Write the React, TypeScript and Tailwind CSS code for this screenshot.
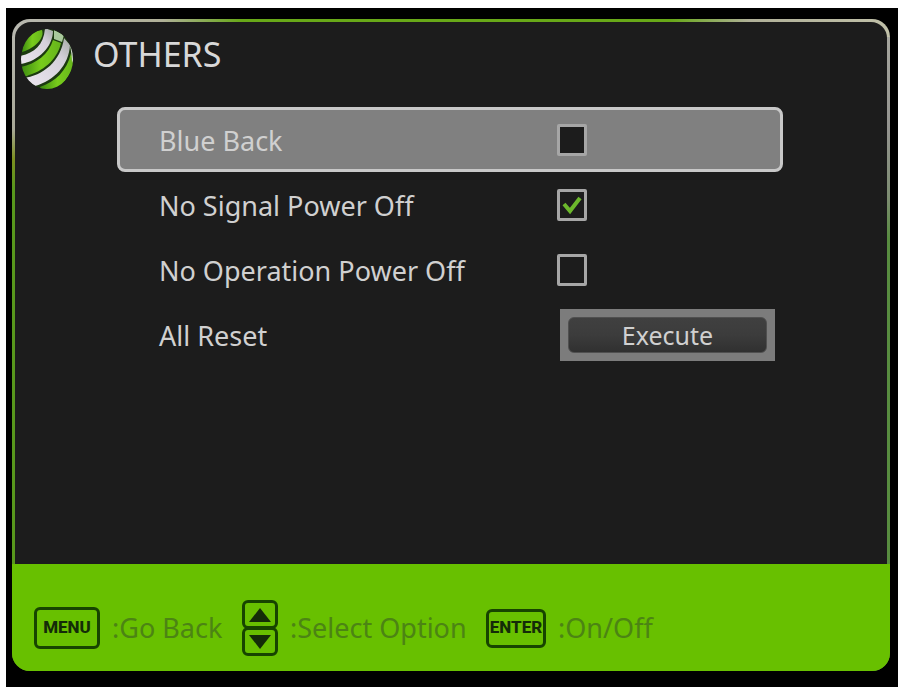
import { FC, useState } from "react";

interface Option {
  id: string;
  label: string;
  checked: boolean;
}

const initialOptions: Option[] = [
  { id: "blue-back", label: "Blue Back", checked: false },
  { id: "no-signal", label: "No Signal Power Off", checked: true },
  { id: "no-operation", label: "No Operation Power Off", checked: false },
];

const Logo: FC = () => (
  <svg viewBox="0 0 54 62" className="h-[62px] w-[54px] shrink-0" aria-hidden="true">
    <defs>
      <clipPath id="globe">
        <ellipse cx="26" cy="31" rx="26" ry="30" />
      </clipPath>
      <linearGradient id="leaf" x1="0" y1="0" x2="1" y2="0">
        <stop offset="0" stopColor="#3c8a10" />
        <stop offset="0.5" stopColor="#78cc1c" />
        <stop offset="1" stopColor="#66b41c" />
      </linearGradient>
      <linearGradient id="ribbon" x1="0" y1="1" x2="1" y2="0">
        <stop offset="0" stopColor="#ece6f0" />
        <stop offset="0.7" stopColor="#d4d0da" />
        <stop offset="1" stopColor="#a4aaa4" />
      </linearGradient>
    </defs>
    <g clipPath="url(#globe)">
      <rect width="54" height="62" fill="#1c3a10" />
      <path d="M1 24C2 12 9 3 21 2C24 10 14 20 1 24Z" fill="url(#leaf)" />
      <path d="M-1 28C13 25 23 17 24 0L32 3C32 18 18 33 0 36Z" fill="url(#ribbon)" />
      <path d="M0 39C15 36 28 26 32 12L40 15C37 29 25 42 8 47C4 50 0 47 0 39Z" fill="url(#leaf)" />
      <path d="M33 2L43 7L41 14L33 11Z" fill="#a9c99c" />
      <path d="M2 50C22 48 40 33 43 10L49 17C48 37 33 53 14 58Z" fill="url(#ribbon)" />
      <path d="M19 59C34 54 46 43 50 25L54 38L38 62L20 62Z" fill="url(#leaf)" />
      <path d="M49 17L54 28L51 35C51 29 50 23 49 17Z" fill="#d0d8cc" />
    </g>
  </svg>
);

const App: FC = () => {
  const [options, setOptions] = useState(initialOptions);
  const [selected, setSelected] = useState("blue-back");

  const toggle = (id: string) => {
    setSelected(id);
    setOptions(
      options.map((o) => (o.id === id ? { ...o, checked: !o.checked } : o))
    );
  };

  return (
    <div className="min-h-screen bg-white pt-2 pr-[3px] pl-[6px] font-['Noto_Sans','Open_Sans',sans-serif]">
      <div className="flex min-h-[calc(100vh-8px)] flex-col bg-black pt-[11px] pr-2 pb-4 pl-[6px]">
        {/* Menu frame, the edge fades from grey at the top corners to green */}
        <div className="flex grow flex-col overflow-hidden rounded-[18px] [background:linear-gradient(90deg,#b8b8b0_0,#b0b098_150px,#68a818_230px,#68a818_75%,#b0b098_84%,#c0c0a8_100%)_top/100%_18px_no-repeat,linear-gradient(180deg,#b8b8b0_0,#a8a898_110px,#7c9020_140px,#58981c_170px)_left/50%_100%_no-repeat,linear-gradient(180deg,#a8a8a0_0,#949490_110px,#7c8c70_180px,#588c40_220px)_right/50%_100%_no-repeat] px-[3px] pt-[3px]">
          <main className="grow rounded-t-[16px] bg-[#1c1c1c]">
            <header className="flex items-start gap-[18px] pt-[6px] pl-[6px]">
              <Logo />
              <h1 className="pt-1 text-[34px] leading-[44px] text-[#d8d8d8]">
                OTHERS
              </h1>
            </header>

            <div className="mr-[104px] ml-[102px] pt-[17px] text-[27px] text-[#d0d0d0]">
              {options.map((option) => (
                <div
                  key={option.id}
                  className={`flex h-[65px] items-center rounded-lg border-[3px] pr-[5px] pl-[39px] ${
                    option.id === selected
                      ? "border-[#c8c8c8] bg-[#808080]"
                      : "border-transparent"
                  }`}
                >
                  <label htmlFor={option.id} className="grow pt-1">
                    {option.label}
                  </label>
                  <div className="flex w-[218px]">
                    <span className="relative h-8 w-[30px]">
                      <input
                        id={option.id}
                        type="checkbox"
                        checked={option.checked}
                        onChange={() => toggle(option.id)}
                        className="block h-8 w-[30px] appearance-none rounded-xs border-[3px] border-[#a6a6a6] bg-[#1c1c1c]"
                      />
                      {option.checked && (
                        <svg
                          viewBox="0 0 30 32"
                          className="pointer-events-none absolute inset-0"
                          aria-hidden="true"
                        >
                          <path
                            d="M7 15L13 22L23 9"
                            fill="none"
                            stroke="#6cb82c"
                            strokeWidth="4"
                          />
                        </svg>
                      )}
                    </span>
                  </div>
                </div>
              ))}

              <div className="flex h-[65px] items-center border-[3px] border-transparent pr-[5px] pl-[39px]">
                <span id="all-reset" className="grow pt-1">
                  All Reset
                </span>
                <div className="w-[218px] pl-[3px]">
                  <div className="bg-[#7c7c7c] p-2">
                    <button
                      type="button"
                      aria-describedby="all-reset"
                      className="block h-9 w-full rounded-md border border-[#505050] bg-linear-to-b from-[#404040] via-[#3c3c3c] to-[#303030] text-[25px] leading-[32px]"
                    >
                      Execute
                    </button>
                  </div>
                </div>
              </div>
            </div>
          </main>

          {/* Key hints */}
          <footer className="-mx-[3px] flex h-[107px] items-center bg-[#68c000] pt-[21px] pl-[22px] text-[27px] whitespace-nowrap text-[#4c8414]">
            <kbd className="flex h-[42px] w-[66px] items-center justify-center rounded-md border-[3px] border-[#174400] font-['Roboto',sans-serif] text-[17px] font-extrabold text-[#142c08]">
              MENU
            </kbd>
            <span className="w-[142px] pl-3">:Go Back</span>
            <kbd className="flex w-9 flex-col">
              <span className="flex h-[29px] items-center justify-center rounded-md border-[3px] border-[#174400]">
                <svg viewBox="0 0 22 14" className="h-[14px] w-[22px]" aria-label="Up">
                  <path d="M11 0L22 14H0Z" fill="#142c08" />
                </svg>
              </span>
              <span className="-mt-[2px] flex h-[29px] items-center justify-center rounded-md border-[3px] border-[#174400]">
                <svg viewBox="0 0 22 14" className="h-[14px] w-[22px]" aria-label="Down">
                  <path d="M11 14L0 0H22Z" fill="#142c08" />
                </svg>
              </span>
            </kbd>
            <span className="w-[208px] pl-3">:Select Option</span>
            <kbd className="flex h-[39px] w-[60px] items-center justify-center rounded-md border-[3px] border-[#174400] font-['Roboto',sans-serif] text-[17px] font-extrabold text-[#142c08]">
              ENTER
            </kbd>
            <span className="pl-3">:On/Off</span>
          </footer>
        </div>
      </div>
    </div>
  );
};

export default App;
